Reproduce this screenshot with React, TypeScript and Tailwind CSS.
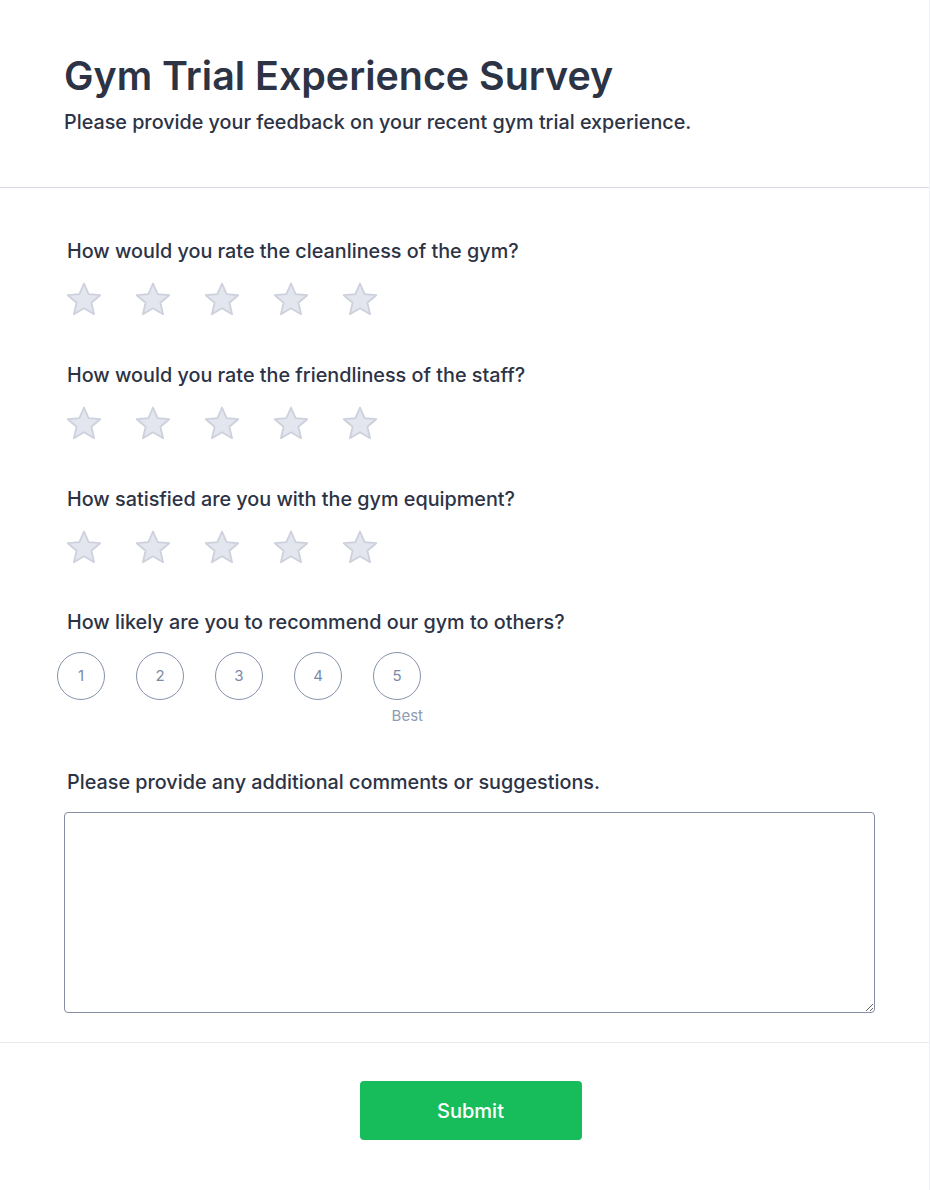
const questions = [
  'How would you rate the cleanliness of the gym?',
  'How would you rate the friendliness of the staff?',
  'How satisfied are you with the gym equipment?',
]

const Star = () => (
  <svg width="40" height="40" viewBox="0 0 40 40" className="block">
    <path
      d="M20 3.5 L24.6 14.2 L36.2 15.2 L27.4 22.8 L30.1 34.2 L20 28.2 L9.9 34.2 L12.6 22.8 L3.8 15.2 L15.4 14.2 Z"
      fill="#e3e6ef"
      stroke="#cdd1dc"
      strokeWidth="1.8"
      strokeLinejoin="round"
    />
  </svg>
)

const StarRow = () => (
  <div className="mt-[15px] flex gap-[29px]">
    {[1, 2, 3, 4, 5].map((n) => (
      <Star key={n} />
    ))}
  </div>
)

export default function App() {
  return (
    <div
      className="w-[930px] min-h-[1190px] border-r border-b border-[#eef0f4] bg-white text-[#2c3345]"
      style={{ fontFamily: 'Inter, "Noto Sans", sans-serif' }}
    >
      <header className="border-b border-[#d9dbea] pl-16 pt-[54px] pb-[51px]">
        <h1 className="text-[39.4px] font-semibold leading-[45px]">
          Gym Trial Experience Survey
        </h1>
        <p className="mt-[10px] text-[19.75px] font-medium leading-[27px]">
          Please provide your feedback on your recent gym trial experience.
        </p>
      </header>

      <main className="pl-16 pt-[49px] pb-[29px] pr-[55px]">
        {questions.map((q, i) => (
          <section key={q} className={i > 0 ? 'mt-[41px]' : ''}>
            <label className="ml-[3px] block text-[19.8px] font-medium leading-[28px]">
              {q}
            </label>
            <StarRow />
          </section>
        ))}

        <section className="mt-[40px]">
          <label className="ml-[3px] block text-[19.8px] font-medium leading-[28px]">
            How likely are you to recommend our gym to others?
          </label>
          <div className="-ml-[7px] mt-4 flex gap-[31px]">
            {[1, 2, 3, 4, 5].map((n) => (
              <div key={n} className="relative">
                <div className="flex h-12 w-12 items-center justify-center rounded-full border border-[#8691ad] text-[15px] text-[#7b8aa6]">
                  {n}
                </div>
                {n === 5 && (
                  <span className="absolute right-[-2px] top-[54px] text-[15px] leading-5 text-[#8d9bb0]">
                    Best
                  </span>
                )}
              </div>
            ))}
          </div>
        </section>

        <section className="mt-[68px]">
          <label className="ml-[3px] block text-[19.8px] font-medium leading-[28px]">
            Please provide any additional comments or suggestions.
          </label>
          <textarea className="mt-4 block h-[201px] w-[811px] rounded-[4px] border border-[#878ca6] p-3 outline-none" />
        </section>
      </main>

      <footer className="flex justify-center border-t border-[#eaebf1] pt-[38px] pb-[50px]">
        <button className="ml-[12px] h-[59px] w-[222px] rounded-[4px] bg-[#18bd5b] text-[20px] font-medium text-white">
          Submit
        </button>
      </footer>
    </div>
  )
}
